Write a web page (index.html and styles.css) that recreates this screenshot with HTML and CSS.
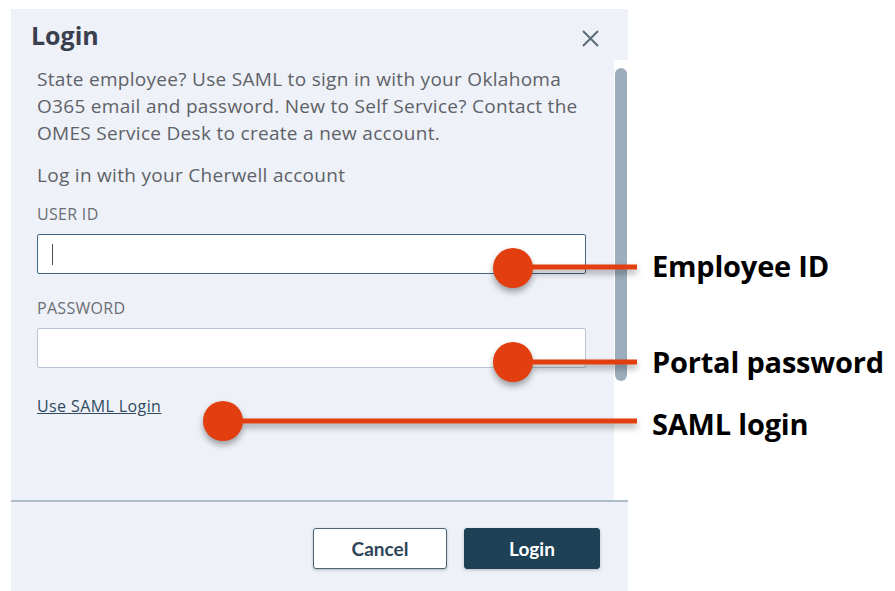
FILE: index.html
```html
<!DOCTYPE html>
<html lang="en">
<head>
<meta charset="utf-8">
<title>Login</title>
<link rel="stylesheet" href="styles.css">
</head>
<body>
<div class="stage">
  <div class="dialog">
    <div class="dialog-header">
      <h1 class="dialog-title">Login</h1>
      <button class="close-btn" aria-label="Close">
        <svg width="17" height="17" viewBox="0 0 17 17"><path d="M1 1 L16 16 M16 1 L1 16" stroke="#5b6b78" stroke-width="2" fill="none"/></svg>
      </button>
    </div>
    <div class="dialog-body">
      <div class="dialog-content">
        <p class="intro">State employee? Use SAML to sign in with your Oklahoma O365 email and password. New to Self Service? Contact the OMES Service Desk to create a new account.</p>
        <p class="subhead">Log in with your Cherwell account</p>
        <label class="field-label" for="userid">USER ID</label>
        <div class="input focused"><span class="caret"></span></div>
        <label class="field-label pw-label" for="password">PASSWORD</label>
        <div class="input"></div>
        <a class="saml-link" href="#">Use SAML Login</a>
      </div>
      <div class="scroll-track"><div class="scroll-thumb"></div></div>
    </div>
    <div class="dialog-footer">
      <button class="btn btn-secondary">Cancel</button>
      <button class="btn btn-primary">Login</button>
    </div>
  </div>

  <div class="callouts">
    <svg class="callout-lines" width="895" height="591" viewBox="0 0 895 591">
      <g fill="#e33e0f" stroke="#e33e0f">
        <line x1="513" y1="267" x2="637" y2="267" stroke-width="5"/>
        <circle cx="513" cy="268" r="20" stroke="none"/>
        <line x1="513" y1="362" x2="637" y2="362" stroke-width="5"/>
        <circle cx="513" cy="362" r="20" stroke="none"/>
        <line x1="223" y1="421" x2="637" y2="421" stroke-width="5"/>
        <circle cx="223" cy="421" r="20" stroke="none"/>
      </g>
    </svg>
    <span class="callout-label label-id">Employee ID</span>
    <span class="callout-label label-pw">Portal password</span>
    <span class="callout-label label-saml">SAML login</span>
  </div>
</div>
</body>
</html>
```
FILE: styles.css
```css
html, body {
  margin: 0;
  padding: 0;
  background: #ffffff;
}

.stage {
  position: relative;
  width: 895px;
  height: 591px;
  padding: 9px 0 0 11px;
  box-sizing: border-box;
  overflow: hidden;
  font-family: "Open Sans", "Noto Sans", sans-serif;
}

.dialog {
  width: 617px;
  height: 582px;
  background: #eef1f8;
  display: flex;
  flex-direction: column;
}

.dialog-header {
  height: 51px;
  display: flex;
  align-items: center;
  justify-content: space-between;
  padding: 0 29px 0 20px;
  flex: none;
}

.dialog-title {
  margin: 0;
  font-size: 25px;
  font-weight: 700;
  color: #3a3f4f;
}

.close-btn {
  border: 0;
  background: none;
  padding: 0;
  width: 17px;
  height: 17px;
  display: flex;
  position: relative;
  top: 4px;
}

.dialog-body {
  flex: none;
  height: 440px;
  display: flex;
}

.dialog-content {
  flex: 1;
  padding: 0 28px 0 26px;
  display: flex;
  flex-direction: column;
  align-items: flex-start;
  color: #5e6268;
}

.intro,
.subhead {
  font-size: 19px;
  letter-spacing: 0.3px;
  line-height: 27px;
}

.intro {
  margin: 6px 0 0;
}

.subhead {
  margin: 15px 0 0;
}

.field-label {
  margin-top: 15px;
  font-size: 16px;
  letter-spacing: 0.3px;
  line-height: 20px;
  color: #6a6e74;
}

.pw-label {
  margin-top: 24px;
}

.input {
  margin-top: 10px;
  align-self: stretch;
  height: 40px;
  box-sizing: border-box;
  background: #ffffff;
  border: 1px solid #b9c5d2;
  border-radius: 2px;
  display: flex;
  align-items: center;
  padding-left: 14px;
}

.input.focused {
  border-color: #3f6788;
}

.caret {
  width: 1px;
  height: 21px;
  background: #4a4f55;
}

.saml-link {
  margin-top: 28px;
  font-size: 16px;
  letter-spacing: 0.4px;
  line-height: 20px;
  color: #2f4b5f;
  text-decoration: underline;
}

.scroll-track {
  width: 14px;
  background: #ffffff;
  padding-top: 8px;
  flex: none;
}

.scroll-thumb {
  width: 12px;
  margin-left: 1px;
  height: 313px;
  border-radius: 6px;
  background: #9cadbd;
}

.dialog-footer {
  flex: 1;
  border-top: 2px solid #aebbc9;
  display: flex;
  justify-content: flex-end;
  align-items: flex-start;
  gap: 17px;
  padding: 26px 28px 0 0;
}

.btn {
  height: 41px;
  border-radius: 3px;
  font-family: "Lato", "Noto Sans", sans-serif;
  font-size: 19px;
  font-weight: 700;
  box-shadow: 0 1px 3px rgba(0, 0, 0, 0.25);
  cursor: pointer;
}

.btn-secondary {
  width: 134px;
  background: #ffffff;
  border: 1px solid #4d6475;
  color: #2d4456;
}

.btn-primary {
  width: 136px;
  background: #1f4155;
  border: 1px solid #1f4155;
  color: #ffffff;
}

/* annotation layer drawn on top of the dialog */
.callouts {
  position: absolute;
  inset: 0;
  pointer-events: none;
}

.callout-lines {
  position: absolute;
  left: 0;
  top: 0;
  filter: drop-shadow(0 4px 3px rgba(0, 0, 0, 0.35));
}

.callout-label {
  position: absolute;
  left: 652px;
  font-family: "Open Sans", "Noto Sans", sans-serif;
  font-weight: 700;
  font-size: 29px;
  letter-spacing: -0.2px;
  line-height: 32px;
  color: #000000;
  white-space: nowrap;
}

.label-id { top: 250px; }
.label-pw { top: 346px; }
.label-saml { top: 408px; }
```
